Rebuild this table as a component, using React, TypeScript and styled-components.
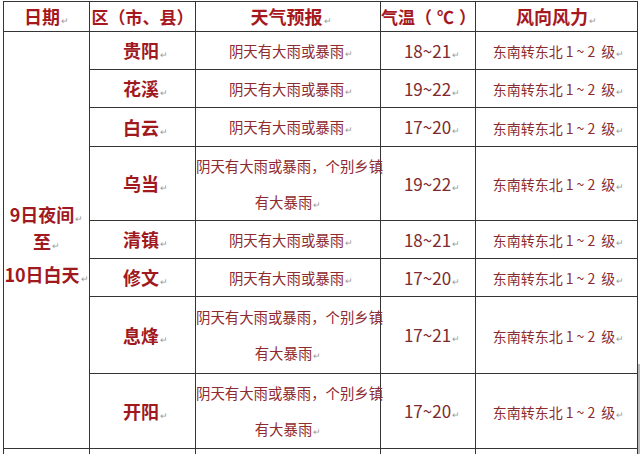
import React from "react";
import styled, { createGlobalStyle } from "styled-components";

const Global = createGlobalStyle`
  html, body { margin: 0; padding: 0; background: #ffffff; }
  body { font-family: "Noto Sans CJK SC", "Noto Sans", sans-serif; overflow: hidden; }
`;

const Sheet = styled.div`
  width: 640px;
  height: 454px;
  overflow: hidden;
  padding: 1px 0 0 3px;
  box-sizing: border-box;
`;

const Table = styled.table`
  border-collapse: collapse;
  table-layout: fixed;
  width: 634px;
`;

const Row = styled.tr<{ $h: number }>`
  height: ${(p) => p.$h}px;
`;

const Cell = styled.td<{ $shift?: number }>`
  border: 1px solid #353535;
  padding: 0 0 0 ${(p) => p.$shift ?? 0}px;
  text-align: center;
  vertical-align: middle;
  white-space: nowrap;
  line-height: 20px;
  overflow: visible;
`;

const HeadText = styled.span<{ $size?: number }>`
  font-size: ${(p) => p.$size ?? 18}px;
  font-weight: 700;
  color: #a5181e;
`;

const Paren = styled.span`
  letter-spacing: 5px;
`;

const Place = styled.span`
  font-size: 18px;
  font-weight: 700;
  color: #a0191f;
`;

const DateBlock = styled.div`
  display: flex;
  flex-direction: column;
  align-items: center;
  padding-top: 7px;
`;

const DateLine = styled.div<{ $gap: number }>`
  font-size: 18px;
  font-weight: 700;
  color: #a0191f;
  line-height: 24px;
  margin-top: ${(p) => p.$gap}px;
`;

const Forecast = styled.div<{ $multi?: boolean }>`
  font-size: 14.4px;
  line-height: ${(p) => (p.$multi ? "36px" : "20px")};
  color: #8e2b30;
`;

const Temp = styled.span`
  font-size: 17px;
  color: #7e2a2e;
`;

const Wind = styled.span`
  font-size: 14px;
  color: #8a2c30;
`;

const Range = styled.span`
  letter-spacing: 3px;
`;

const Mark = styled.span`
  font-size: 9px;
  font-weight: 400;
  line-height: 1;
  color: #9a9a9a;
  margin-left: 1px;
`;

const Edge = styled.div`
  position: absolute;
  right: 0;
  top: 364px;
  width: 2px;
  height: 90px;
  background: #b8b8b8;
`;

const Wrap = styled.div`
  position: relative;
`;

type Item = { place: string; multi: boolean; temp: string; h: number };

const items: Item[] = [
  { place: "贵阳", multi: false, temp: "18~21", h: 38 },
  { place: "花溪", multi: false, temp: "19~22", h: 38 },
  { place: "白云", multi: false, temp: "17~20", h: 39 },
  { place: "乌当", multi: true, temp: "19~22", h: 74 },
  { place: "清镇", multi: false, temp: "18~21", h: 38 },
  { place: "修文", multi: false, temp: "17~20", h: 38 },
  { place: "息烽", multi: true, temp: "17~21", h: 77 },
  { place: "开阳", multi: true, temp: "17~20", h: 75 },
];

const M = () => <Mark>↵</Mark>;

export default function App() {
  return (
    <Wrap>
      <Global />
      <Sheet>
        <Table>
          <colgroup>
            <col style={{ width: 86 }} />
            <col style={{ width: 106 }} />
            <col style={{ width: 185 }} />
            <col style={{ width: 95 }} />
            <col style={{ width: 162 }} />
          </colgroup>
          <tbody>
            <Row $h={30}>
              <Cell>
                <HeadText>日期</HeadText>
                <M />
              </Cell>
              <Cell>
                <HeadText $size={17}>区（市、县）</HeadText>
              </Cell>
              <Cell $shift={6}>
                <HeadText>天气预报</HeadText>
                <M />
              </Cell>
              <Cell>
                <HeadText $size={17}>
                  气温<Paren>（℃）</Paren>
                </HeadText>
              </Cell>
              <Cell>
                <HeadText>风向风力</HeadText>
                <M />
              </Cell>
            </Row>
            {items.map((it, i) => (
              <Row $h={it.h} key={it.place}>
                {i === 0 && (
                  <Cell rowSpan={items.length}>
                    <DateBlock>
                      <DateLine $gap={0}>
                        9日夜间
                        <M />
                      </DateLine>
                      <DateLine $gap={3}>
                        至<M />
                      </DateLine>
                      <DateLine $gap={9}>
                        10日白天
                        <M />
                      </DateLine>
                    </DateBlock>
                  </Cell>
                )}
                <Cell $shift={6}>
                  <Place>{it.place}</Place>
                  <M />
                </Cell>
                <Cell $shift={it.multi ? 0 : 6}>
                  {it.multi ? (
                    <Forecast $multi>
                      阴天有大雨或暴雨，个别乡镇
                      <br />
                      有大暴雨
                      <M />
                    </Forecast>
                  ) : (
                    <Forecast>
                      阴天有大雨或暴雨
                      <M />
                    </Forecast>
                  )}
                </Cell>
                <Cell $shift={8}>
                  <Temp>{it.temp}</Temp>
                  <M />
                </Cell>
                <Cell $shift={4}>
                  <Wind>
                    东南转东北 <Range>1~2</Range> 级
                  </Wind>
                  <M />
                </Cell>
              </Row>
            ))}
            <Row $h={20}>
              <Cell />
              <Cell />
              <Cell />
              <Cell />
              <Cell />
            </Row>
          </tbody>
        </Table>
      </Sheet>
      <Edge />
    </Wrap>
  );
}
